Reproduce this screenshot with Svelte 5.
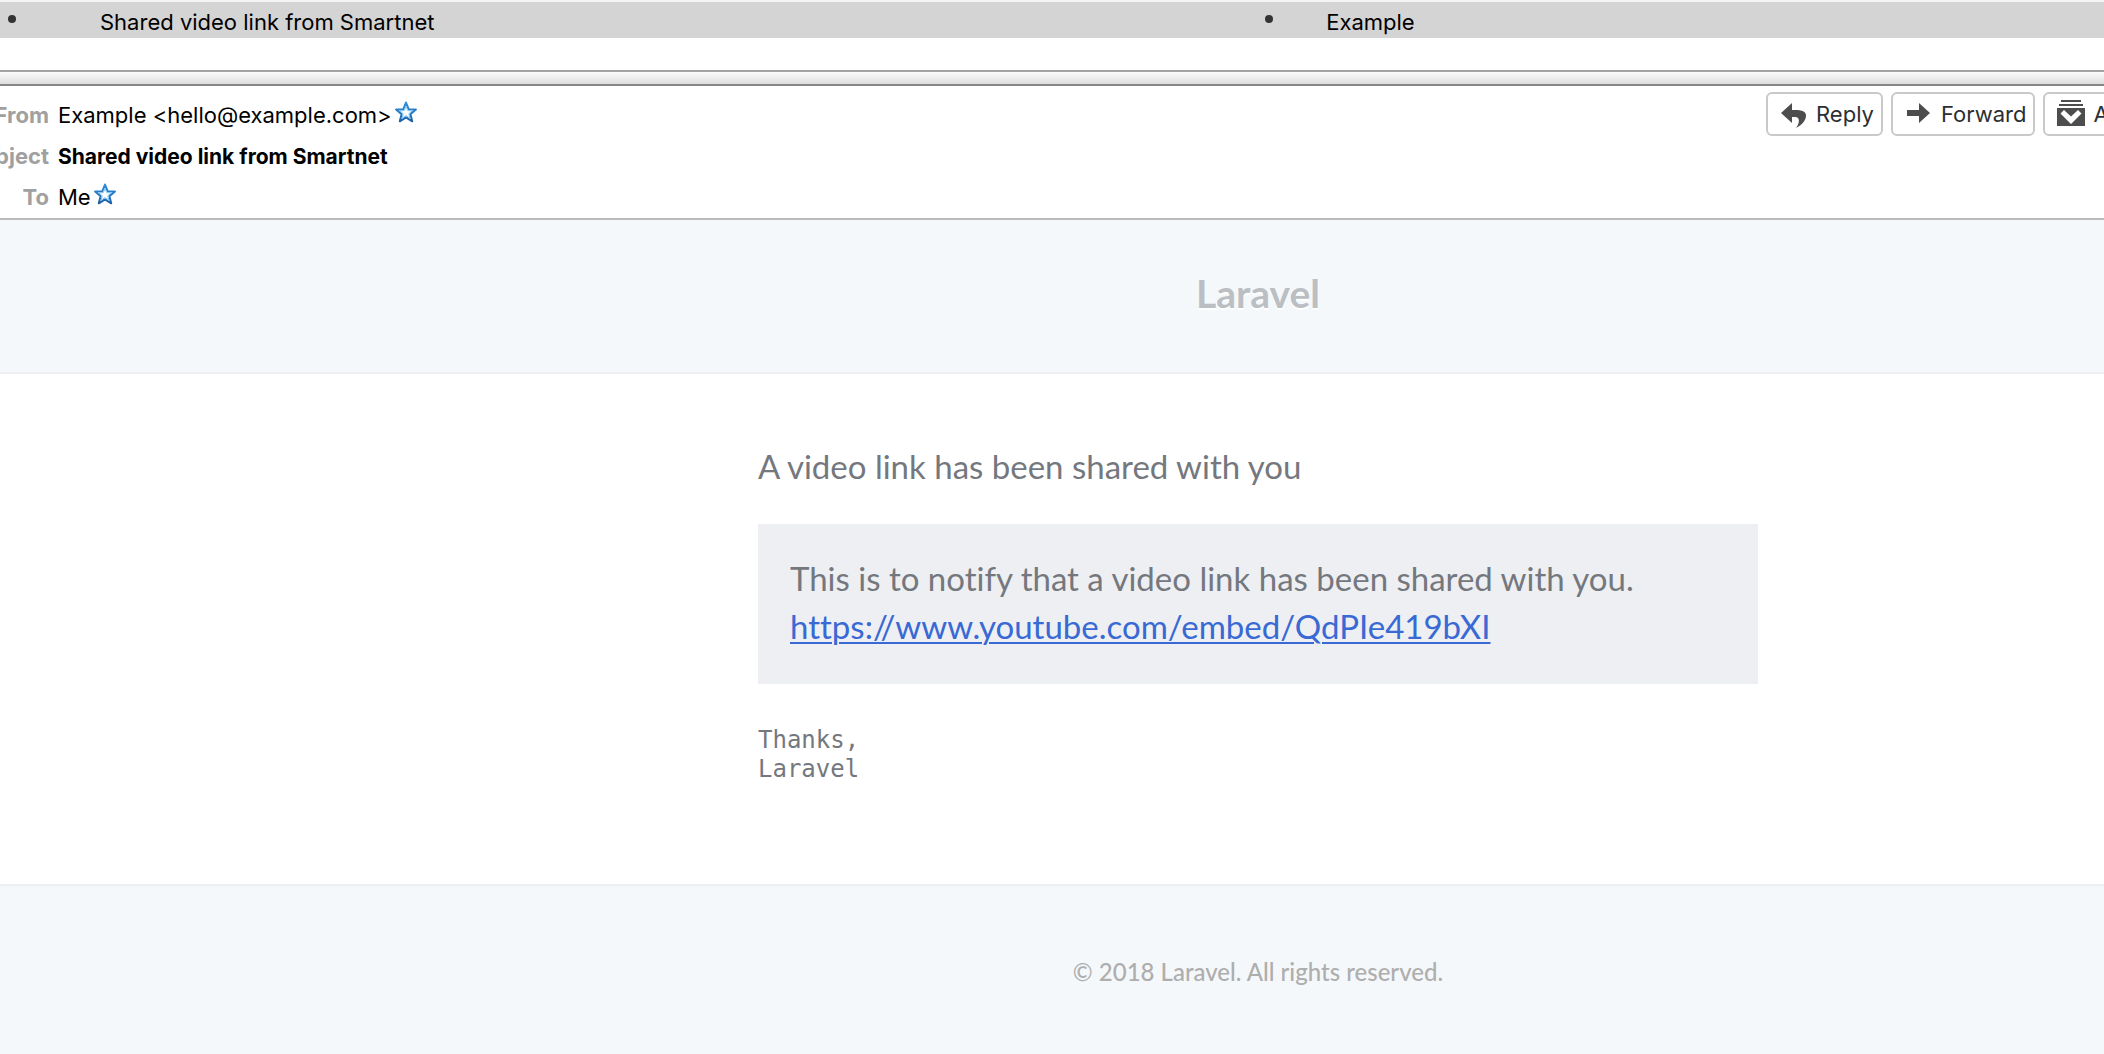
<script>
  const star =
    'M11 1.5 13.7 8.2 20.9 8.6 15.4 13.2 17.2 20.3 11 16.4 4.8 20.3 6.6 13.2 1.1 8.6 8.3 8.2Z';
  const columns = [
    { name: 'Subject', text: 'Shared video link from Smartnet' },
    { name: 'Correspondents', text: 'Example' },
  ];
  const fields = [
    { label: 'From', value: 'Example <hello@example.com>', starred: true },
    { label: 'Subject', value: 'Shared video link from Smartnet', bold: true },
    { label: 'To', value: 'Me', starred: true },
  ];
  const videoUrl = 'https://www.youtube.com/embed/QdPIe419bXI';
</script>

<div class="client">
  <table class="messages">
    <tbody>
      <tr>
        {#each columns as column, i (column.name)}
          <td class="mark" class:first={i === 0}><span class="dot"></span></td>
          <td class="cell" class:subject={i === 0}>{column.text}</td>
        {/each}
      </tr>
    </tbody>
  </table>

  <div class="splitter"></div>

  <header class="envelope">
    <dl class="fields">
      {#each fields as field (field.label)}
        <div class="field">
          <dt>{field.label}</dt>
          <dd class:bold={field.bold}>
            <span>{field.value}</span>
            {#if field.starred}
              <button class="star" aria-label="Add to address book">
                <svg viewBox="0 0 22 22" width="22" height="22">
                  <defs>
                    <linearGradient id="edge-{field.label}" x1="0" y1="0" x2="0" y2="1">
                      <stop offset="0" stop-color="#2f8fdd" />
                      <stop offset="1" stop-color="#1d62a8" />
                    </linearGradient>
                  </defs>
                  <path d={star} fill="#fff" stroke="url(#edge-{field.label})" stroke-width="2" stroke-linejoin="round" />
                  <path d="M11 5.2 12.7 9.6 17.2 9.9 13.8 12.7 14.9 17.1 11 14.6 7.1 17.1 8.2 12.7 4.8 9.9 9.3 9.6Z" fill="none" stroke="#7cc4f5" stroke-width="1" />
                </svg>
              </button>
            {/if}
          </dd>
        </div>
      {/each}
    </dl>

    <div class="toolbar">
      <button class="action">
        <svg viewBox="0 0 28 28" width="28" height="28" fill="#4d4d4d">
          <path d="M1 13 12 3V10H15C22 10 26 11.500 26 15.500C26 20.500 22 25 16 28 19.500 23.500 20.500 17 15 17H12V23Z" />
        </svg>
        <span>Reply</span>
      </button>
      <button class="action">
        <svg viewBox="0 0 28 28" width="28" height="28" fill="#4d4d4d">
          <path d="M2 10H14V3L25 13 14 23V16H2Z" />
        </svg>
        <span>Forward</span>
      </button>
      <button class="action">
        <svg viewBox="0 0 28 28" width="28" height="28" fill="#4d4d4d">
          <path d="M4 0H24V2H4ZM2 4H26V6H2ZM0 8H28V26H0Z" />
          <path d="M3.500 13.500 7 10 14 16.500 21 10 24.500 13.500 14 24Z" fill="#fff" />
        </svg>
        <span>Archive</span>
      </button>
    </div>
  </header>

  <article class="mail">
    <div class="masthead"><a class="brand" href="#laravel">Laravel</a></div>
    <div class="body">
      <div class="content">
        <p class="lead">A video link has been shared with you</p>
        <div class="panel">
          <p>This is to notify that a video link has been shared with you.</p>
          <a href={videoUrl}>{videoUrl}</a>
        </div>
        <pre class="sign">Thanks,
Laravel</pre>
      </div>
    </div>
    <footer class="legal">© 2018 Laravel. All rights reserved.</footer>
  </article>
</div>

<style>
  :global(body) {
    margin: 0;
    background: #f5f8fa;
  }
  .client {
    min-height: 100vh;
    display: flex;
    flex-direction: column;
    overflow: hidden;
    background: #fff;
    color: #000;
    font: 22px/36px Inter, 'Liberation Sans', sans-serif;
  }
  .messages {
    width: 100%;
    table-layout: fixed;
    border-collapse: collapse;
    border-top: 2px solid #f4f4f4;
    background: #d4d4d4;
  }
  td {
    height: 36px;
    padding: 0;
    white-space: nowrap;
  }
  .cell {
    height: 32px;
    padding-top: 4px;
    line-height: 32px;
  }
  .mark {
    width: 69px;
    vertical-align: top;
  }
  .mark.first {
    width: 100px;
  }
  .subject {
    width: 55%;
  }
  .mark .dot {
    display: block;
    width: 8px;
    height: 8px;
    margin: 13px 0 0 8px;
    border-radius: 50%;
    background: #333;
  }
  .splitter {
    height: 12px;
    margin-top: 32px;
    border-top: 2px solid #a3a3a3;
    border-bottom: 2px solid #868686;
    background: linear-gradient(#fcfcfc, #dedede);
  }
  .envelope {
    display: flex;
    justify-content: space-between;
    height: 132px;
    border-bottom: 2px solid #bbb;
  }
  .fields {
    margin: 9px 0 0;
  }
  .field {
    display: flex;
    gap: 9px;
    height: 41px;
    line-height: 41px;
  }
  dt {
    display: flex;
    justify-content: flex-end;
    width: 49px;
    color: #a0a0a0;
    font-weight: 700;
  }
  dd {
    display: flex;
    align-items: center;
    gap: 3px;
    margin: 0;
    white-space: nowrap;
  }
  .bold {
    font-size: 21px;
    font-weight: 700;
  }
  button {
    font: inherit;
    cursor: pointer;
  }
  .star {
    display: flex;
    padding: 0 0 8px;
    border: 0;
    background: none;
  }
  .toolbar {
    display: flex;
    flex: 0 0 338px;
    min-width: 0;
    gap: 8px;
    align-items: flex-start;
    padding-top: 6px;
  }
  .action {
    display: flex;
    flex: none;
    align-items: center;
    gap: 8px;
    height: 44px;
    padding: 0 7px 0 12px;
    border: 2px solid #c9c9c9;
    border-radius: 6px;
    background: #fff;
    color: #2b2f33;
  }
  .mail {
    display: flex;
    flex: 1;
    flex-direction: column;
    background: #f5f8fa;
    color: #74787e;
    font: 33px/48px Lato, 'Open Sans', sans-serif;
    font-variant-ligatures: none;
  }
  .masthead,
  .body,
  .legal {
    display: flex;
    justify-content: center;
    padding-left: 412px;
  }
  .masthead {
    padding-top: 49px;
    padding-bottom: 55px;
  }
  .brand {
    color: #bbbfc3;
    font-size: 39px;
    font-weight: 700;
    text-decoration: none;
    text-shadow: 0 2px 0 #fff;
  }
  .body {
    padding-top: 68px;
    padding-bottom: 100px;
    border-top: 2px solid #edeff2;
    border-bottom: 2px solid #edeff2;
    background: #fff;
  }
  .content {
    width: 1000px;
  }
  p {
    margin: 0;
  }
  .panel {
    margin: 34px 0 42px;
    padding: 30px 32px 34px;
    background: #edeff2;
  }
  .panel a {
    color: #3869d4;
    text-underline-offset: 3px;
    text-decoration-thickness: 2px;
  }
  .sign {
    margin: 0;
    font: 24px/29px 'DejaVu Sans Mono', monospace;
  }
  .legal {
    padding-top: 62px;
    color: #aeaeae;
    font-size: 24px;
    font-weight: 500;
  }
</style>
